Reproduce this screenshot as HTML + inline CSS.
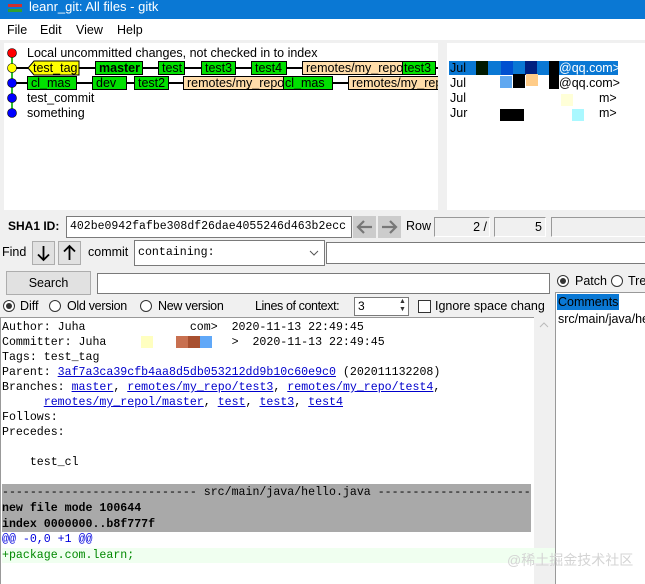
<!DOCTYPE html>
<html><head><meta charset="utf-8">
<style>
*{margin:0;padding:0;box-sizing:border-box}
body{width:645px;height:584px;overflow:hidden;background:#f0f0f0;position:relative;font-family:"Liberation Sans",sans-serif;font-size:12px;color:#000}
.a{position:absolute;white-space:nowrap}
.lbl{position:absolute;height:14px;line-height:13px;border:1px solid #000;padding:0 3px;font-size:12.5px;white-space:nowrap;overflow:hidden}
.g{background:#00e000}
.o{background:#ffddaa}
.box{position:absolute;background:#fff;border:1px solid #a0a0a0}
.mono{font-family:"Liberation Mono",monospace;font-size:11.6px}
.btn{position:absolute;background:#e1e1e1;border:1px solid #adadad}
.rad{position:absolute;width:12px;height:12px;border:1px solid #333;border-radius:50%;background:#fff}
.rad.on::after{content:"";position:absolute;left:2px;top:2px;width:6px;height:6px;border-radius:50%;background:#333}
.tl{position:absolute;left:2px;white-space:pre;height:15px;line-height:15px}
a{color:#0000cc;text-decoration:underline}
</style></head><body>
<!-- title -->
<div class="a" style="left:0;top:0;width:645px;height:19px;background:#0a78d4"></div>
<div class="a" style="left:8px;top:4px;width:14px;height:3px;background:#d03030"></div>
<div class="a" style="left:8px;top:9px;width:14px;height:3px;background:#30a030"></div>
<div class="a" style="left:29px;top:-1px;color:#fff;font-size:13px">leanr_git: All files - gitk</div>
<!-- menu -->
<div class="a" style="left:0;top:19px;width:645px;height:21px;background:#fff"></div>
<div class="a" style="left:7px;top:23px;font-size:12.5px">File</div>
<div class="a" style="left:40px;top:23px;font-size:12.5px">Edit</div>
<div class="a" style="left:76px;top:23px;font-size:12.5px">View</div>
<div class="a" style="left:117px;top:23px;font-size:12.5px">Help</div>
<!-- graph pane -->
<div class="a" style="left:4px;top:43px;width:434px;height:167px;background:#fff"></div>
<div class="a" style="left:447px;top:43px;width:198px;height:167px;background:#fff"></div>
<svg class="a" style="left:0;top:40px" width="438" height="90">
<line x1="12" y1="13" x2="12" y2="73" stroke="#30c030" stroke-width="2"/>
<line x1="12" y1="28" x2="438" y2="28" stroke="#000" stroke-width="2"/>
<line x1="12" y1="43" x2="438" y2="43" stroke="#000" stroke-width="2"/>
<circle cx="12" cy="13" r="4.5" fill="#ff0000" stroke="#000" stroke-width=".6"/>
<circle cx="12" cy="28" r="4.5" fill="#ffff00" stroke="#000" stroke-width=".6"/>
<circle cx="12" cy="43" r="4.5" fill="#0000ff" stroke="#000" stroke-width=".6"/>
<circle cx="12" cy="58" r="4.5" fill="#0000ff" stroke="#000" stroke-width=".6"/>
<circle cx="12" cy="73" r="4.5" fill="#0000ff" stroke="#000" stroke-width=".6"/>
<polygon points="34,21 79,21 79,35 34,35 28,28" fill="#ffff00" stroke="#000"/>
</svg>
<div class="a" style="left:27px;top:46px;font-size:12.5px">Local uncommitted changes, not checked in to index</div>
<div class="a" style="left:33px;top:61px;font-size:12.5px">test_tag</div>
<div class="lbl g" style="left:95px;top:61px;width:48px;font-weight:bold">master</div>
<div class="lbl g" style="left:158px;top:61px;width:27px">test</div>
<div class="lbl g" style="left:201px;top:61px;width:35px">test3</div>
<div class="lbl g" style="left:251px;top:61px;width:36px">test4</div>
<div class="lbl o" style="left:302px;top:61px;width:101px;border-right:none">remotes/my_repo/</div>
<div class="lbl g" style="left:402px;top:61px;width:34px;padding:0 1px">test3</div>
<div class="lbl g" style="left:27px;top:76px;width:50px">cl_mas</div>
<div class="lbl g" style="left:92px;top:76px;width:35px">dev</div>
<div class="lbl g" style="left:134px;top:76px;width:35px">test2</div>
<div class="lbl o" style="left:183px;top:76px;width:101px;border-right:none">remotes/my_repo/</div>
<div class="lbl g" style="left:283px;top:76px;width:50px;padding:0 1px">cl_mas</div>
<div class="lbl o" style="left:348px;top:76px;width:90px;border-right:none">remotes/my_rep</div>
<div class="a" style="left:27px;top:91px;font-size:12.5px">test_commit</div>
<div class="a" style="left:27px;top:106px;font-size:12.5px">something</div>
<!-- author pane -->
<div class="a" style="left:449px;top:61px;width:169px;height:14px;background:#0a78d4"></div>
<div class="a" style="left:476px;top:61px;width:12px;height:14px;background:#001a00"></div>
<div class="a" style="left:501px;top:61px;width:12px;height:14px;background:#0050d0"></div>
<div class="a" style="left:525px;top:61px;width:12px;height:14px;background:#002080"></div>
<div class="a" style="left:549px;top:61px;width:10px;height:28px;background:#000"></div>
<div class="a" style="left:500px;top:76px;width:12px;height:12px;background:#60a8f0"></div>
<div class="a" style="left:513px;top:74px;width:12px;height:14px;background:#000"></div>
<div class="a" style="left:526px;top:74px;width:12px;height:12px;background:#ffcc88"></div>
<div class="a" style="left:561px;top:94px;width:12px;height:12px;background:#ffffd8"></div>
<div class="a" style="left:500px;top:109px;width:24px;height:12px;background:#000"></div>
<div class="a" style="left:572px;top:109px;width:12px;height:12px;background:#aaf8ff"></div>
<div class="a" style="left:450px;top:61px;color:#000;font-size:12.5px">Jul</div>
<div class="a" style="left:559px;top:61px;color:#fff;font-size:12.5px">@qq.com&gt;</div>
<div class="a" style="left:450px;top:76px;font-size:12.5px">Jul</div>
<div class="a" style="left:559px;top:76px;font-size:12.5px">@qq.com&gt;</div>
<div class="a" style="left:450px;top:91px;font-size:12.5px">Jul</div>
<div class="a" style="left:599px;top:91px;font-size:12.5px">m&gt;</div>
<div class="a" style="left:450px;top:106px;font-size:12.5px">Jur</div>
<div class="a" style="left:599px;top:106px;font-size:12.5px">m&gt;</div>
<!-- SHA row -->
<div class="a" style="left:8px;top:219px;font-weight:bold;font-size:12px">SHA1 ID:</div>
<div class="box mono" style="left:66px;top:216px;width:286px;height:22px;padding:3px 3px;font-size:11.5px;border-color:#7a7a7a;overflow:hidden">402be0942fafbe308df26dae4055246d463b2ecc</div>
<svg class="a" style="left:353px;top:216px" width="50" height="23"><rect x="0" y="0" width="23" height="22" fill="#ccc"/><rect x="25" y="0" width="23" height="22" fill="#ccc"/><path d="M19 11H5M11 5L5 11L11 17" stroke="#777" stroke-width="2.2" fill="none"/><path d="M29 11H43M37 5L43 11L37 17" stroke="#777" stroke-width="2.2" fill="none"/></svg>
<div class="a" style="left:406px;top:219px;font-size:12.5px">Row</div>
<div class="a" style="left:434px;top:217px;width:56px;height:20px;border:1px solid #999;border-right-color:#fff;border-bottom-color:#fff;text-align:right;padding-right:2px;line-height:18px;font-size:12.5px">2 /</div>
<div class="a" style="left:494px;top:217px;width:52px;height:20px;border:1px solid #999;border-right-color:#fff;border-bottom-color:#fff;text-align:right;padding-right:3px;line-height:18px;font-size:12.5px">5</div>
<div class="a" style="left:551px;top:217px;width:94px;height:20px;border:1px solid #999;border-right:none;border-bottom-color:#fff"></div>
<!-- Find row -->
<div class="a" style="left:2px;top:245px;font-size:12.5px">Find</div>
<svg class="a" style="left:32px;top:241px" width="50" height="24"><rect x="0.5" y="0.5" width="22" height="23" fill="#e1e1e1" stroke="#adadad"/><rect x="26.5" y="0.5" width="22" height="23" fill="#e1e1e1" stroke="#adadad"/><path d="M11.5 5V19M6 13.5L11.5 19L17 13.5" stroke="#000" stroke-width="1.8" fill="none"/><path d="M37.5 19V5M32 10.5L37.5 5L43 10.5" stroke="#000" stroke-width="1.8" fill="none"/></svg>
<div class="a" style="left:88px;top:245px;font-size:12.5px">commit</div>
<div class="box mono" style="left:134px;top:240px;width:191px;height:26px;padding:5px 3px;border-color:#7a7a7a">containing:</div>
<svg class="a" style="left:309px;top:250px" width="10" height="6"><path d="M1 1L5 5L9 1" stroke="#555" fill="none"/></svg>
<div class="box" style="left:326px;top:242px;width:325px;height:22px;border-color:#7a7a7a"></div>
<!-- search row -->
<div class="btn" style="left:6px;top:271px;width:85px;height:24px;text-align:center;line-height:22px;font-size:12.5px">Search</div>
<div class="box" style="left:97px;top:273px;width:453px;height:21px;border-color:#7a7a7a"></div>
<div class="rad on" style="left:557px;top:275px"></div>
<div class="a" style="left:575px;top:274px;font-size:12.5px">Patch</div>
<div class="rad" style="left:611px;top:275px"></div>
<div class="a" style="left:628px;top:274px;font-size:12.5px">Tre</div>
<!-- diff row -->
<div class="rad on" style="left:3px;top:300px"></div>
<div class="a" style="left:20px;top:299px;font-size:12.5px">Diff</div>
<div class="rad" style="left:49px;top:300px"></div>
<div class="a" style="left:67px;top:299px;font-size:12.5px;letter-spacing:-.3px">Old version</div>
<div class="rad" style="left:140px;top:300px"></div>
<div class="a" style="left:158px;top:299px;font-size:12.5px;letter-spacing:-.3px">New version</div>
<div class="a" style="left:255px;top:299px;font-size:12.5px;letter-spacing:-.4px">Lines of context:</div>
<div class="box" style="left:354px;top:297px;width:55px;height:19px;padding:1px 3px;font-size:12px;border-color:#7a7a7a">3</div>
<div class="a" style="left:399px;top:298px;font-size:7px;line-height:8px;color:#333">&#9650;<br>&#9660;</div>
<div class="a" style="left:418px;top:300px;width:13px;height:13px;border:1px solid #333;background:#fff"></div>
<div class="a" style="left:435px;top:299px;width:110px;overflow:hidden;font-size:12.5px">Ignore space change</div>
<!-- right list -->
<div class="a" style="left:555px;top:292px;width:90px;height:292px;background:#fff;border-left:1px solid #999;border-top:1px solid #999;overflow:hidden">
<div class="a" style="left:1px;top:1px;width:62px;height:16px;background:#0a78d4"></div>
<div class="a" style="left:2px;top:2px;font-size:12.5px">Comments</div>
<div class="a" style="left:2px;top:19px;font-size:12.5px">src/main/java/hello.java</div>
</div>
<!-- text pane -->
<div class="a" style="left:0;top:317px;width:534px;height:267px;background:#fff;border-top:1px solid #999;border-left:1px solid #999"></div>
<div class="a" style="left:534px;top:317px;width:21px;height:267px;background:#f0f0f0"></div>
<svg class="a" style="left:539px;top:322px" width="10" height="6"><path d="M1 5L5 1L9 5" stroke="#bbb" fill="none"/></svg>
<div class="a mono" style="left:0;top:320px;width:534px;height:160px;overflow:hidden">
<div class="tl" style="top:0">Author: Juha               com&gt;  2020-11-13 22:49:45</div>
<div class="tl" style="top:15px">Committer: Juha                  &gt;  2020-11-13 22:49:45</div>
<div class="tl" style="top:30px">Tags: test_tag</div>
<div class="tl" style="top:45px">Parent: <a>3af7a3ca39cfb4aa8d5db053212dd9b10c60e9c0</a> (202011132208)</div>
<div class="tl" style="top:60px">Branches: <a>master</a>, <a>remotes/my_repo/test3</a>, <a>remotes/my_repo/test4</a>,</div>
<div class="tl" style="top:75px">      <a>remotes/my_repol/master</a>, <a>test</a>, <a>test3</a>, <a>test4</a></div>
<div class="tl" style="top:90px">Follows:</div>
<div class="tl" style="top:105px">Precedes:</div>
<div class="tl" style="top:135px">    test_cl</div>
</div>
<div class="a" style="left:141px;top:336px;width:12px;height:12px;background:#ffffc0"></div>
<div class="a" style="left:176px;top:336px;width:12px;height:12px;background:#c87050"></div>
<div class="a" style="left:188px;top:336px;width:12px;height:12px;background:#a85030"></div>
<div class="a" style="left:200px;top:336px;width:12px;height:12px;background:#60a8f8"></div>
<div class="a" style="left:2px;top:484px;width:529px;height:48px;background:#a9a9a9"></div>
<div class="a mono" style="left:0;top:485px;width:531px;height:48px;overflow:hidden;font-weight:bold">
<div class="tl" style="top:0;font-weight:normal">---------------------------- src/main/java/hello.java ---------------------------</div>
<div class="tl" style="top:16px">new file mode 100644</div>
<div class="tl" style="top:32px">index 0000000..b8f777f</div>
</div>
<div class="a" style="left:2px;top:548px;width:553px;height:15px;background:#f0fff0"></div>
<div class="a mono" style="left:0;top:532px">
<div class="tl" style="top:0;color:#0000dd">@@ -0,0 +1 @@</div>
<div class="tl" style="top:16px;color:#008800">+package.com.learn;</div>
</div>
<div class="a" style="left:507px;top:550px;font-family:'Liberation Sans','Noto Sans CJK SC',sans-serif;font-size:14px;color:#d4d4d4">@稀土掘金技术社区</div>
</body></html>
